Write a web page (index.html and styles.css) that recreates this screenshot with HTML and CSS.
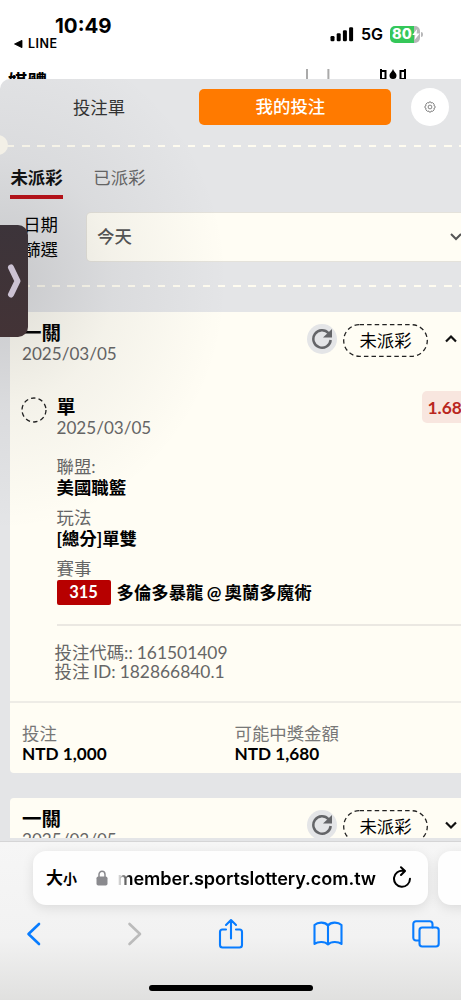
FILE: index.html
```html
<!DOCTYPE html>
<html lang="zh-Hant">
<head>
<meta charset="utf-8">
<meta name="viewport" content="width=device-width, initial-scale=1">
<title>我的投注</title>
<link rel="stylesheet" href="styles.css">
</head>
<body>
<div class="phone">
  <header class="status">
    <div class="status-left">
      <div class="clock">10:49</div>
      <div class="back-app"><svg width="9" height="8" viewBox="0 0 9 8"><path d="M.5 4 8 .3V7.7Z" stroke="#000" stroke-width=".8" stroke-linejoin="round"/></svg><span>LINE</span></div>
    </div>
    <div class="status-right">
      <svg class="signal" width="24" height="15" viewBox="0 0 24 15"><rect x=".5" y="9" width="4" height="5.3" rx="1.2"/><rect x="6.7" y="6.3" width="4" height="8" rx="1.2"/><rect x="12.9" y="3.2" width="4" height="11.1" rx="1.2"/><rect x="19.1" y=".2" width="4" height="14.1" rx="1.2"/></svg>
      <span class="network">5G</span>
      <div class="battery"><span>80</span><svg width="8" height="11" viewBox="0 0 8 11"><path d="M5.2 0 .3 6.1h3L2.6 11 7.7 4.6H4.6Z" fill="#fff"/></svg></div>
      <i class="battery-cap"></i>
    </div>
  </header>
  <div class="peek">
    <span class="peek-text">媒體</span>
    <svg class="peek-icons" width="102" height="11" viewBox="0 0 102 11"><path d="M2 0v11M23.400 0v11" stroke="#aaa" stroke-width="2"/><path d="M76 0v11M76 2h4.500v8H76M100 0v11M100 2h-4.500v8h4.500" fill="none" stroke="#000" stroke-width="2"/><path d="M88 0c1 3 3.500 4 3.500 6.500a3.500 3.500 0 0 1-7 0C84.500 4 87 3 88 0Z"/></svg>
  </div>

  <main class="sheet">
    <nav class="switcher">
      <span class="switch">投注單</span>
      <span class="switch switch-on">我的投注</span>
      <span class="gear"><svg width="12" height="12" viewBox="0 0 12 12" fill="none" stroke="#666" stroke-width=".8"><path d="M5 1h2l.5 1.100 1.200-.4 1.500 1.500-.4 1.200L11 5v2l-1.200.6.4 1.200-1.500 1.500-1.200-.4L7 11H5l-.5-1.100-1.200.4-1.500-1.500.4-1.200L1 7V5l1.200-.6-.4-1.200 1.500-1.500 1.200.4Z"/><circle cx="6" cy="6" r="1.900"/></svg></span>
    </nav>
    <div class="dashes"></div>
    <div class="tabs"><span class="tab tab-on">未派彩</span><span class="tab">已派彩</span></div>
    <div class="filter">
      <label class="filter-label">日期<br>篩選</label>
      <div class="select"><span>今天</span><svg width="14" height="10" viewBox="0 0 14 10"><path d="m2 2 5 5 5-5" fill="none" stroke="#555" stroke-width="2"/></svg></div>
    </div>
    <div class="dashes"></div>

    <section class="card">
      <div class="card-head">
        <div class="card-title"><h2>一關</h2><time>2025/03/05</time></div>
        <span class="refresh"><svg width="22" height="22" viewBox="0 0 22 22"><path d="M17.600 5.300A8.700 8.700 0 1 0 19.700 12" fill="none" stroke="#646568" stroke-width="2.500"/><path d="M21 1v8.600h-9Z" fill="#646568"/></svg></span>
        <span class="pill"><svg width="85" height="33" viewBox="0 0 85 33"><rect x=".7" y=".7" width="83.600" height="31.600" rx="15.800"/></svg><b>未派彩</b></span>
        <svg class="caret" width="14" height="10" viewBox="0 0 14 10"><path d="m2 7.500 5-5 5 5"/></svg>
      </div>
      <div class="bet">
        <div class="bet-mark"><svg width="26" height="26" viewBox="0 0 26 26"><circle cx="13" cy="13" r="12"/></svg></div>
        <div class="bet-body">
          <div class="bet-top"><div><h3>單</h3><time>2025/03/05</time></div><span class="odds">1.68</span></div>
          <dl class="facts">
            <dt>聯盟:</dt><dd>美國職籃</dd>
            <dt>玩法</dt><dd>[總分]單雙</dd>
            <dt>賽事</dt><dd class="match"><span class="code">315</span>多倫多暴龍 @ 奧蘭多魔術</dd>
          </dl>
          <div class="ids"><div>投注代碼:: 161501409</div><div>投注 ID: 182866840.1</div></div>
        </div>
      </div>
      <div class="totals">
        <div><span>投注</span><strong>NTD 1,000</strong></div>
        <div><span>可能中獎金額</span><strong>NTD 1,680</strong></div>
      </div>
    </section>

    <section class="card card-cut">
      <div class="card-head">
        <div class="card-title"><h2>一關</h2><time>2025/03/05</time></div>
        <span class="refresh"><svg width="22" height="22" viewBox="0 0 22 22"><path d="M17.600 5.300A8.700 8.700 0 1 0 19.700 12" fill="none" stroke="#646568" stroke-width="2.500"/><path d="M21 1v8.600h-9Z" fill="#646568"/></svg></span>
        <span class="pill"><svg width="85" height="33" viewBox="0 0 85 33"><rect x=".7" y=".7" width="83.600" height="31.600" rx="15.800"/></svg><b>未派彩</b></span>
        <svg class="caret" width="14" height="10" viewBox="0 0 14 10"><path d="m2 2.500 5 5 5-5"/></svg>
      </div>
    </section>
    <i class="shade"></i>
    <i class="notch"></i>
    <div class="drawer"><svg width="14" height="34" viewBox="0 0 14 34"><path d="M4 3.500 10.500 17 4 30.500" fill="none" stroke="#ccc2d3" stroke-width="6" stroke-linecap="round" stroke-linejoin="round"/></svg></div>
  </main>

  <footer class="browser">
    <div class="address-row">
      <div class="address">
        <span class="aa">大<small>小</small></span>
        <svg class="lock" width="12" height="16" viewBox="0 0 12 16"><rect x=".5" y="6.500" width="11" height="9" rx="1.800" fill="#8a8a8e"/><path d="M3 7V4.500a3 3.200 0 0 1 6 0V7" fill="none" stroke="#8a8a8e" stroke-width="1.500"/></svg>
        <span class="url">member.sportslottery.com.tw</span>
        <svg class="reload" width="20" height="24" viewBox="0 0 20 24" fill="none" stroke="#000" stroke-width="2" stroke-linecap="round" stroke-linejoin="round"><path d="M11.500 4.900A8 8 0 1 0 18 12.800M9 1.300l4 3.700-4 4"/></svg>
      </div>
      <div class="address-next"></div>
    </div>
    <div class="tools">
      <svg width="16" height="24" viewBox="0 0 16 24"><path d="M13 2 2.500 12 13 22" stroke-width="2.600"/></svg>
      <svg class="off" width="16" height="24" viewBox="0 0 16 24"><path d="m2.500 2 10.500 10L2.500 22" stroke-width="2.600"/></svg>
      <svg width="26" height="32" viewBox="0 0 26 32"><path d="M8 11.500H4.500A2.500 2.500 0 0 0 2 14v13a2.500 2.500 0 0 0 2.500 2.500h17A2.500 2.500 0 0 0 24 27V14a2.500 2.500 0 0 0-2.500-2.500H18M13 20.500V2.500M8 7l5-5 5 5"/></svg>
      <svg width="30" height="26" viewBox="0 0 30 26"><path d="M15 4.500v19M15 4.500C12 .8 5 .8 1.500 4v19c3.500-2.800 10.500-2.800 13.500.5 3-3.300 10-3.300 13.500-.5V4C25 .8 18 .8 15 4.500Z"/></svg>
      <svg width="28" height="28" viewBox="0 0 28 28"><path d="M7 20.500H4A2.700 2.700 0 0 1 1.300 17.800V4A2.700 2.700 0 0 1 4 1.300h13.800A2.700 2.700 0 0 1 20.500 4v3.500"/><rect x="7.500" y="7.500" width="19.200" height="19" rx="2.700"/></svg>
    </div>
    <div class="home"></div>
  </footer>
</div>
</body>
</html>
```

FILE: styles.css
```css
* { box-sizing: border-box; }
body { margin: 0; background: #fff; }
h2, h3, dl, dd { margin: 0; }
svg { display: block; flex: none; }
.phone {
  width: 461px; height: 1000px; overflow: hidden;
  display: flex; flex-direction: column;
  font: 17.4px/20px Lato, "Noto Sans CJK TC", sans-serif;
  color: #000; white-space: nowrap;
}

.status { height: 69px; flex: none; display: flex; justify-content: space-between; font-family: Inter, sans-serif; }
.status-left { padding: 14px 0 0 14px; }
.clock { padding-left: 41px; font-size: 20.5px; font-weight: 700; line-height: 23px; }
.back-app { display: flex; align-items: center; gap: 5px; font-size: 12.5px; font-weight: 600; line-height: 13px; letter-spacing: .5px; }
.status-right { display: flex; align-items: center; height: 18px; margin: 25px 38px 0 0; }
.network { margin: 0 7px 0 7px; font-size: 16px; font-weight: 600; }
.battery {
  display: flex; align-items: center; width: 30px; height: 17px; padding-left: 2px; border-radius: 5px;
  background: linear-gradient(90deg, #35c759 80%, #b7b7b9 80%);
  color: #fff; font-size: 14.5px; font-weight: 800;
}
.battery-cap { width: 2px; height: 5px; margin-left: 1px; border-radius: 0 2px 2px 0; background: #b7b7b9; }

.peek { display: flex; flex: none; height: 10px; padding-left: 8px; overflow: hidden; }
.peek-text { width: 297px; margin-top: 3px; font-size: 19.500px; font-weight: 700; line-height: 20px; }

.sheet {
  position: relative; flex: none; height: 762px; overflow: hidden;
  border-radius: 10px 0 0 0; background: #e4e5e7;
}
.switcher { display: flex; align-items: center; height: 56px; }
.switch { flex: none; width: 198px; color: #333; text-align: center; line-height: 35px; }
.switch-on { width: 192px; height: 36px; margin-left: 1.4px; padding-right: 10px; border-radius: 5px; background: #ff7a00; color: #fff; font-weight: 500; }
.gear { display: grid; place-items: center; flex: none; width: 38px; height: 38px; margin-left: 20px; border-radius: 50%; background: #fff; }
.dashes { height: 2px; margin: 10px 0 0 7px; background: repeating-linear-gradient(90deg, #fffcf0 0 7.500px, transparent 7.500px 15.070px); }
.tabs { display: flex; gap: 30px; height: 52px; padding: 19px 0 0 10px; }
.tab { height: 33px; padding: 0 .4px; color: #666; line-height: 23px; }
.tab-on { border-bottom: 4px solid #bd1118; color: #111; font-weight: 700; }
.filter { display: flex; height: 62px; padding-top: 14px; }
.filter-label { flex: none; width: 58px; margin: 0 29px 0 0; text-align: right; line-height: 24.500px; }
.select {
  display: flex; align-items: center; justify-content: space-between; flex: none; width: 377px; height: 48px; padding: 0 1px 0 10px;
  border-radius: 4px 0 0 4px; background: #fffdf4; color: #555; font-weight: 500;
  box-shadow: 0 0 0 1px #e4e2db;
}
.filter + .dashes { margin-top: 24px; }

.card { height: 461px; margin: 25px 0 0 10px; border-radius: 4px 0 0 4px; background: #fffdf4; }
.card-head { display: flex; align-items: flex-start; height: 72px; padding: 12px 0 0 12px; }
.card-title { flex: none; width: 285px; margin-top: -2px; }
.card-title h2 { font-size: 19.500px; font-weight: 700; line-height: 21px; }
time { display: block; color: #666; font-size: 17.1px; line-height: 21px; }
.refresh { display: grid; place-items: center; flex: none; width: 30px; height: 30px; border-radius: 50%; background: #e4e5e7; }
.pill { display: grid; place-items: center; flex: none; margin: 0 16px 0 6px; }
.pill > * { grid-area: 1 / 1; }
.pill b { font-weight: 400; }
.pill rect, .bet-mark circle { fill: none; stroke: #222; stroke-width: 1.300; stroke-dasharray: 4.500 3.100; }
.caret { margin-top: 10px; fill: none; stroke: #111; stroke-width: 2.200; }
.bet { display: flex; height: 317px; }
.bet-mark { flex: none; width: 46.5px; padding: 13px 0 0 11px; }
.bet-body { flex: none; width: 440px; }
.bet-top { display: flex; height: 72px; padding-top: 7px; }
.bet-top > div { width: 365px; padding-top: 6px; }
h3 { font-size: 19px; line-height: 20px; font-weight: 700; }
.odds { width: 54px; height: 32px; padding-left: 6px; border-radius: 5px; background: #f8e6df; color: #ba261e; font-weight: 700; line-height: 33px; }
.facts { height: 170px; border-bottom: 2px solid #ebe8e2; }
dt { color: #666; line-height: 21px; }
dd { margin-bottom: 9px; font-weight: 700; line-height: 21px; }
.match { display: flex; align-items: center; gap: 6px; height: 25px; margin-top: 1px; line-height: 25px; word-spacing: -1px; }
.code { flex: none; width: 54px; border-radius: 2px; background: #b70000; color: #fff; text-align: center; font-size: 16.500px; }
.ids { padding-top: 17px; margin-left: -2px; color: #666; line-height: 19px; word-spacing: -.5px; }
.totals { display: flex; height: 72px; padding: 21px 0 0 12px; border-top: 2px solid #eeece6; }
.totals div { flex: none; width: 212.500px; }
.totals span, .totals strong { display: block; line-height: 20px; }
.totals strong { font-size: 17.2px; line-height: 19px; }
.totals span { color: #777; }
.card-cut { height: 40px; margin-top: 25px; overflow: hidden; border-radius: 4px 0 0 0; }

.notch { position: absolute; top: 56px; left: -12px; width: 20px; height: 20px; border-radius: 50%; background: #f3f0e7; }
.shade {
  position: absolute; top: 0; left: 0; width: 240px; height: 480px;
  background: radial-gradient(ellipse 95% 52% at 0 42%, rgba(35, 35, 40, .15), rgba(35, 35, 40, .05) 50%, transparent);
}
.drawer {
  position: absolute; top: 146px; left: 0; display: flex; align-items: center; width: 28px; height: 112px; padding-left: 7px;
  border-radius: 0 10px 10px 0; background: linear-gradient(#3c343a, #433336);
}

.browser { flex: 1; border-top: 1px solid #d5d5d6; background: linear-gradient(#f6f6f6, #f2f2f2 60%, #e0e0df); }
.address-row { display: flex; gap: 10px; padding: 9px 0 0 33px; }
.address {
  display: flex; align-items: center; flex: none; width: 395px; height: 54px; padding-left: 13px; border-radius: 13px;
  background: #fefefe; box-shadow: 0 3px 12px rgba(0, 0, 0, .1);
}
.address-next { flex: none; width: 60px; height: 54px; border-radius: 13px; background: #fefefe; box-shadow: 0 3px 12px rgba(0, 0, 0, .1); }
.aa { width: 50px; font-weight: 700; font-size: 17px; }
.aa small { font-size: 14px; }
.url {
  display: flex; justify-content: flex-end; flex: none; width: 261px; margin: 0 16px 0 7px; overflow: hidden;
  font: 600 18.1px/24px Inter, sans-serif; letter-spacing: -.05px;
  mask-image: linear-gradient(90deg, transparent 2px, #000 16px);
}
.tools { display: flex; align-items: center; height: 58px; padding-left: 26px; }
.tools svg { fill: none; stroke: #087cff; stroke-width: 2.100; stroke-linecap: round; stroke-linejoin: round; }
.tools .off { margin-left: 85px; stroke: #bbb; }
.tools svg:nth-child(3) { margin-left: 75px; }
.tools svg:nth-child(4) { margin-left: 69px; }
.tools svg:nth-child(5) { margin-left: 69px; }
.home { width: 164px; height: 6px; margin: 21px auto 0; border-radius: 3px; background: #000; transform: translateY(1px); }
```
